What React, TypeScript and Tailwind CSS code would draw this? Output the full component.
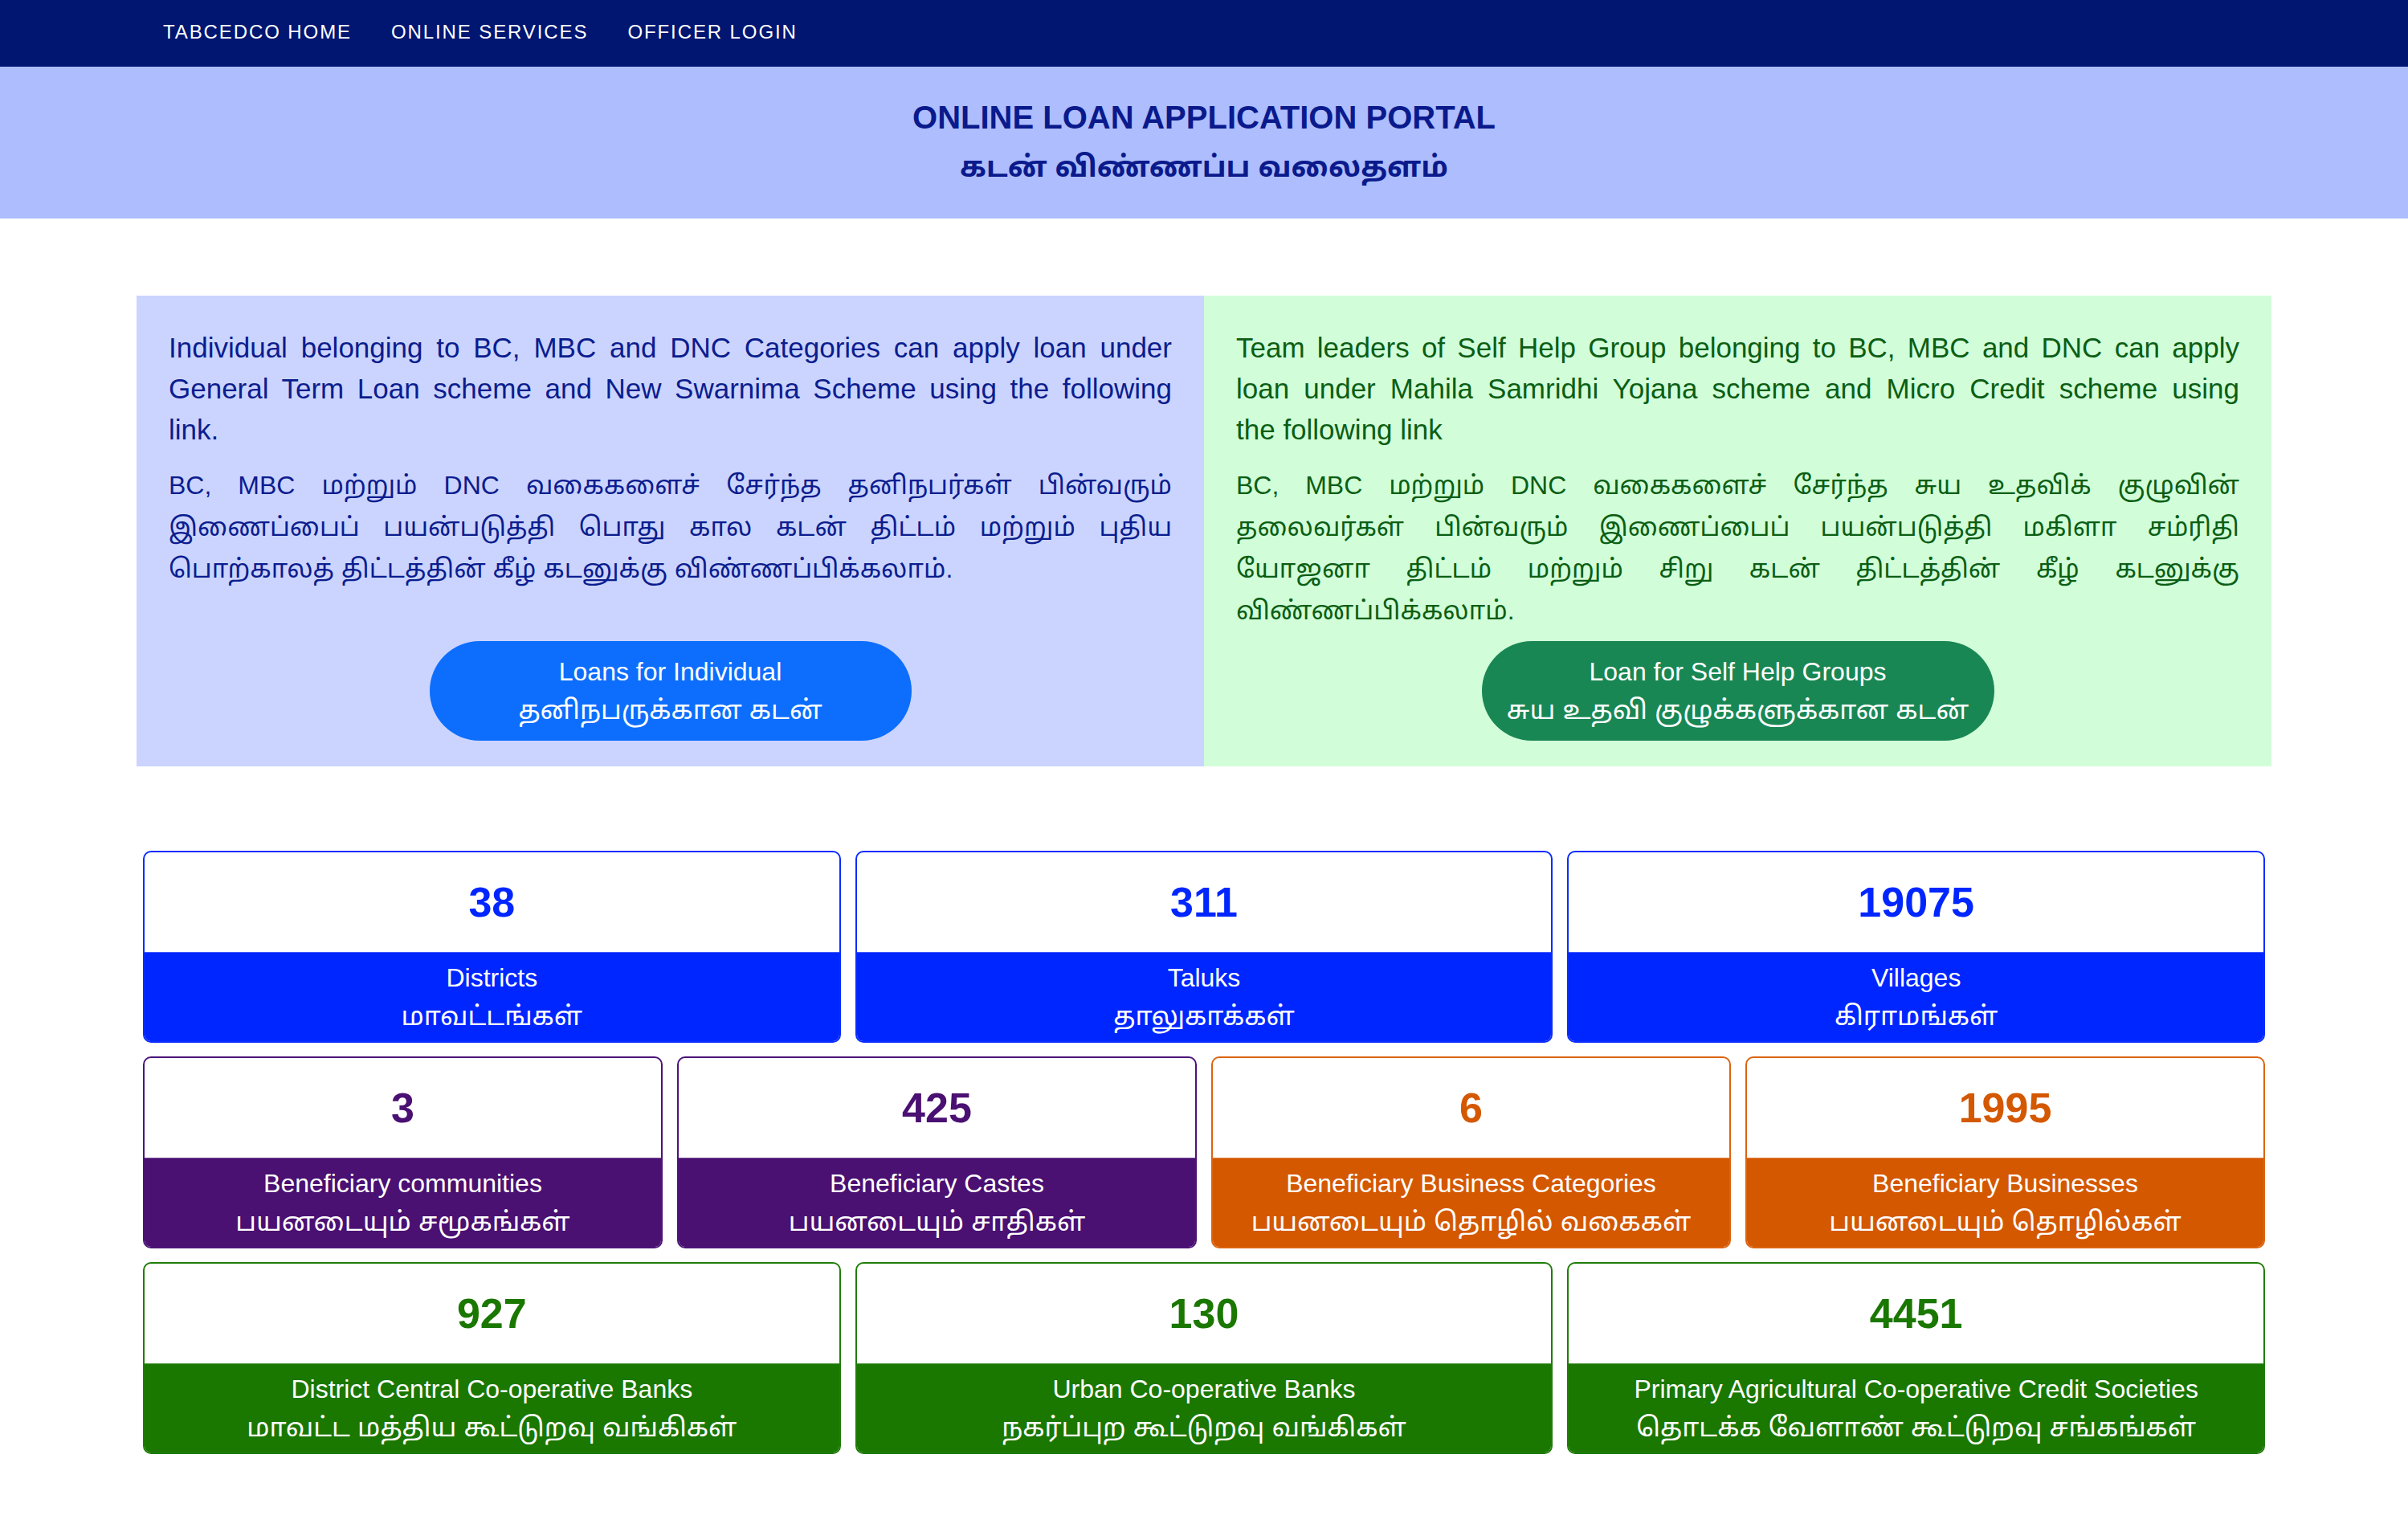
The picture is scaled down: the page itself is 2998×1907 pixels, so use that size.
import React from 'react';

const font = { fontFamily: '"Liberation Sans", Arial, "Noto Sans Tamil", "Lohit Tamil", sans-serif' };

type Stat = { value: string; en: string; ta: string };

const rowOne: Stat[] = [
  { value: '38', en: 'Districts', ta: 'மாவட்டங்கள்' },
  { value: '311', en: 'Taluks', ta: 'தாலுகாக்கள்' },
  { value: '19075', en: 'Villages', ta: 'கிராமங்கள்' },
];

const rowTwo: (Stat & { tone: 'purple' | 'orange' })[] = [
  { value: '3', en: 'Beneficiary communities', ta: 'பயனடையும் சமூகங்கள்', tone: 'purple' },
  { value: '425', en: 'Beneficiary Castes', ta: 'பயனடையும் சாதிகள்', tone: 'purple' },
  { value: '6', en: 'Beneficiary Business Categories', ta: 'பயனடையும் தொழில் வகைகள்', tone: 'orange' },
  { value: '1995', en: 'Beneficiary Businesses', ta: 'பயனடையும் தொழில்கள்', tone: 'orange' },
];

const rowThree: Stat[] = [
  { value: '927', en: 'District Central Co-operative Banks', ta: 'மாவட்ட மத்திய கூட்டுறவு வங்கிகள்' },
  { value: '130', en: 'Urban Co-operative Banks', ta: 'நகர்ப்புற கூட்டுறவு வங்கிகள்' },
  { value: '4451', en: 'Primary Agricultural Co-operative Credit Societies', ta: 'தொடக்க வேளாண் கூட்டுறவு சங்கங்கள்' },
];

const tones = {
  blue: { border: 'border-[#0a2cff]', text: 'text-[#0026ff]', bg: 'bg-[#0026ff]' },
  purple: { border: 'border-[#4b1478]', text: 'text-[#4a1072]', bg: 'bg-[#4a1072]' },
  orange: { border: 'border-[#dc6410]', text: 'text-[#d45800]', bg: 'bg-[#d45800]' },
  green: { border: 'border-[#1f7d08]', text: 'text-[#1a7700]', bg: 'bg-[#1a7700]' },
};

// keeps the line breaks of the original page, each full line justified
function Lines({ lines, className }: { lines: string[]; className: string }) {
  return (
    <p className={className}>
      {lines.map((l, i) => (
        <span
          key={i}
          className={i < lines.length - 1 ? 'block whitespace-nowrap text-justify [text-align-last:justify]' : 'block whitespace-nowrap'}
        >
          {l}
        </span>
      ))}
    </p>
  );
}

function StatCard({ stat, tone }: { stat: Stat; tone: keyof typeof tones }) {
  const t = tones[tone];
  return (
    <div className={`flex flex-col overflow-hidden rounded-[10px] border-2 bg-white ${t.border}`}>
      <div className={`flex h-[124px] items-center justify-center text-[52px] font-bold ${t.text}`}>{stat.value}</div>
      <div className={`border-t border-white/25 py-[7px] text-center leading-[48px] text-white ${t.bg}`}>
        <div className="text-[32px]">{stat.en}</div>
        <div className="text-[33px]">{stat.ta}</div>
      </div>
    </div>
  );
}

export default function App() {
  return (
    <div className="min-h-screen bg-white" style={font}>
      <nav className="flex h-[83px] items-center gap-[49px] bg-[#001670] pl-[203px] pb-[4px] text-[24px] tracking-[1.9px] text-white">
        <a href="#">TABCEDCO HOME</a>
        <a href="#">ONLINE SERVICES</a>
        <a href="#">OFFICER LOGIN</a>
      </nav>

      <header className="flex h-[189px] flex-col items-center justify-center bg-[#adbdfe] font-bold text-[#0a1a8c]">
        <h1 className="-mt-[2px] text-[40px] leading-[62px]">ONLINE LOAN APPLICATION PORTAL</h1>
        <h2 className="text-[36px] leading-[62px]">கடன் விண்ணப்ப வலைதளம்</h2>
      </header>

      <main className="px-[170px] pt-[96px] pb-[92px]">
        <div className="grid grid-cols-2">
          <section className="flex flex-col bg-[#cbd4fe] px-[40px] pt-[39px] pb-[32px] text-[#0b1d8f]">
            <Lines
              className="text-[35px] leading-[51px]"
              lines={[
                'Individual belonging to BC, MBC and DNC Categories can apply loan under',
                'General Term Loan scheme and New Swarnima Scheme using the following',
                'link.',
              ]}
            />
            <Lines
              className="mt-[18px] text-[32px] leading-[52px]"
              lines={[
                'BC, MBC மற்றும் DNC வகைகளைச் சேர்ந்த தனிநபர்கள் பின்வரும்',
                'இணைப்பைப் பயன்படுத்தி பொது கால கடன் திட்டம் மற்றும் புதிய',
                'பொற்காலத் திட்டத்தின் கீழ் கடனுக்கு விண்ணப்பிக்கலாம்.',
              ]}
            />
            <div className="mt-auto flex justify-center pt-[12px]">
              <a href="#" className="w-[600px] rounded-full bg-[#0d6efd] py-[14px] text-center leading-[48px] text-white">
                <div className="text-[32px]">Loans for Individual</div>
                <div className="text-[33px]">தனிநபருக்கான கடன்</div>
              </a>
            </div>
          </section>
          <section className="flex flex-col bg-[#d1fed9] px-[40px] pt-[39px] pb-[32px] text-[#0b5e14]">
            <Lines
              className="text-[35px] leading-[51px]"
              lines={[
                'Team leaders of Self Help Group belonging to BC, MBC and DNC can apply',
                'loan under Mahila Samridhi Yojana scheme and Micro Credit scheme using',
                'the following link',
              ]}
            />
            <Lines
              className="mt-[18px] text-[32px] leading-[52px]"
              lines={[
                'BC, MBC மற்றும் DNC வகைகளைச் சேர்ந்த சுய உதவிக் குழுவின்',
                'தலைவர்கள் பின்வரும் இணைப்பைப் பயன்படுத்தி மகிளா சம்ரிதி',
                'யோஜனா திட்டம் மற்றும் சிறு கடன் திட்டத்தின் கீழ் கடனுக்கு',
                'விண்ணப்பிக்கலாம்.',
              ]}
            />
            <div className="mt-auto flex justify-center pt-[12px]">
              <a href="#" className="w-[638px] rounded-full bg-[#198754] py-[14px] text-center leading-[48px] text-white">
                <div className="text-[32px]">Loan for Self Help Groups</div>
                <div className="text-[33px]">சுய உதவி குழுக்களுக்கான கடன்</div>
              </a>
            </div>
          </section>
        </div>

        <div className="mt-[105px] flex flex-col gap-[17px] px-[8px]">
          <div className="grid grid-cols-3 gap-[18px]">
            {rowOne.map((s) => (
              <StatCard key={s.en} stat={s} tone="blue" />
            ))}
          </div>
          <div className="grid grid-cols-4 gap-[18px]">
            {rowTwo.map((s) => (
              <StatCard key={s.en} stat={s} tone={s.tone} />
            ))}
          </div>
          <div className="grid grid-cols-3 gap-[18px]">
            {rowThree.map((s) => (
              <StatCard key={s.en} stat={s} tone="green" />
            ))}
          </div>
        </div>
      </main>
    </div>
  );
}
